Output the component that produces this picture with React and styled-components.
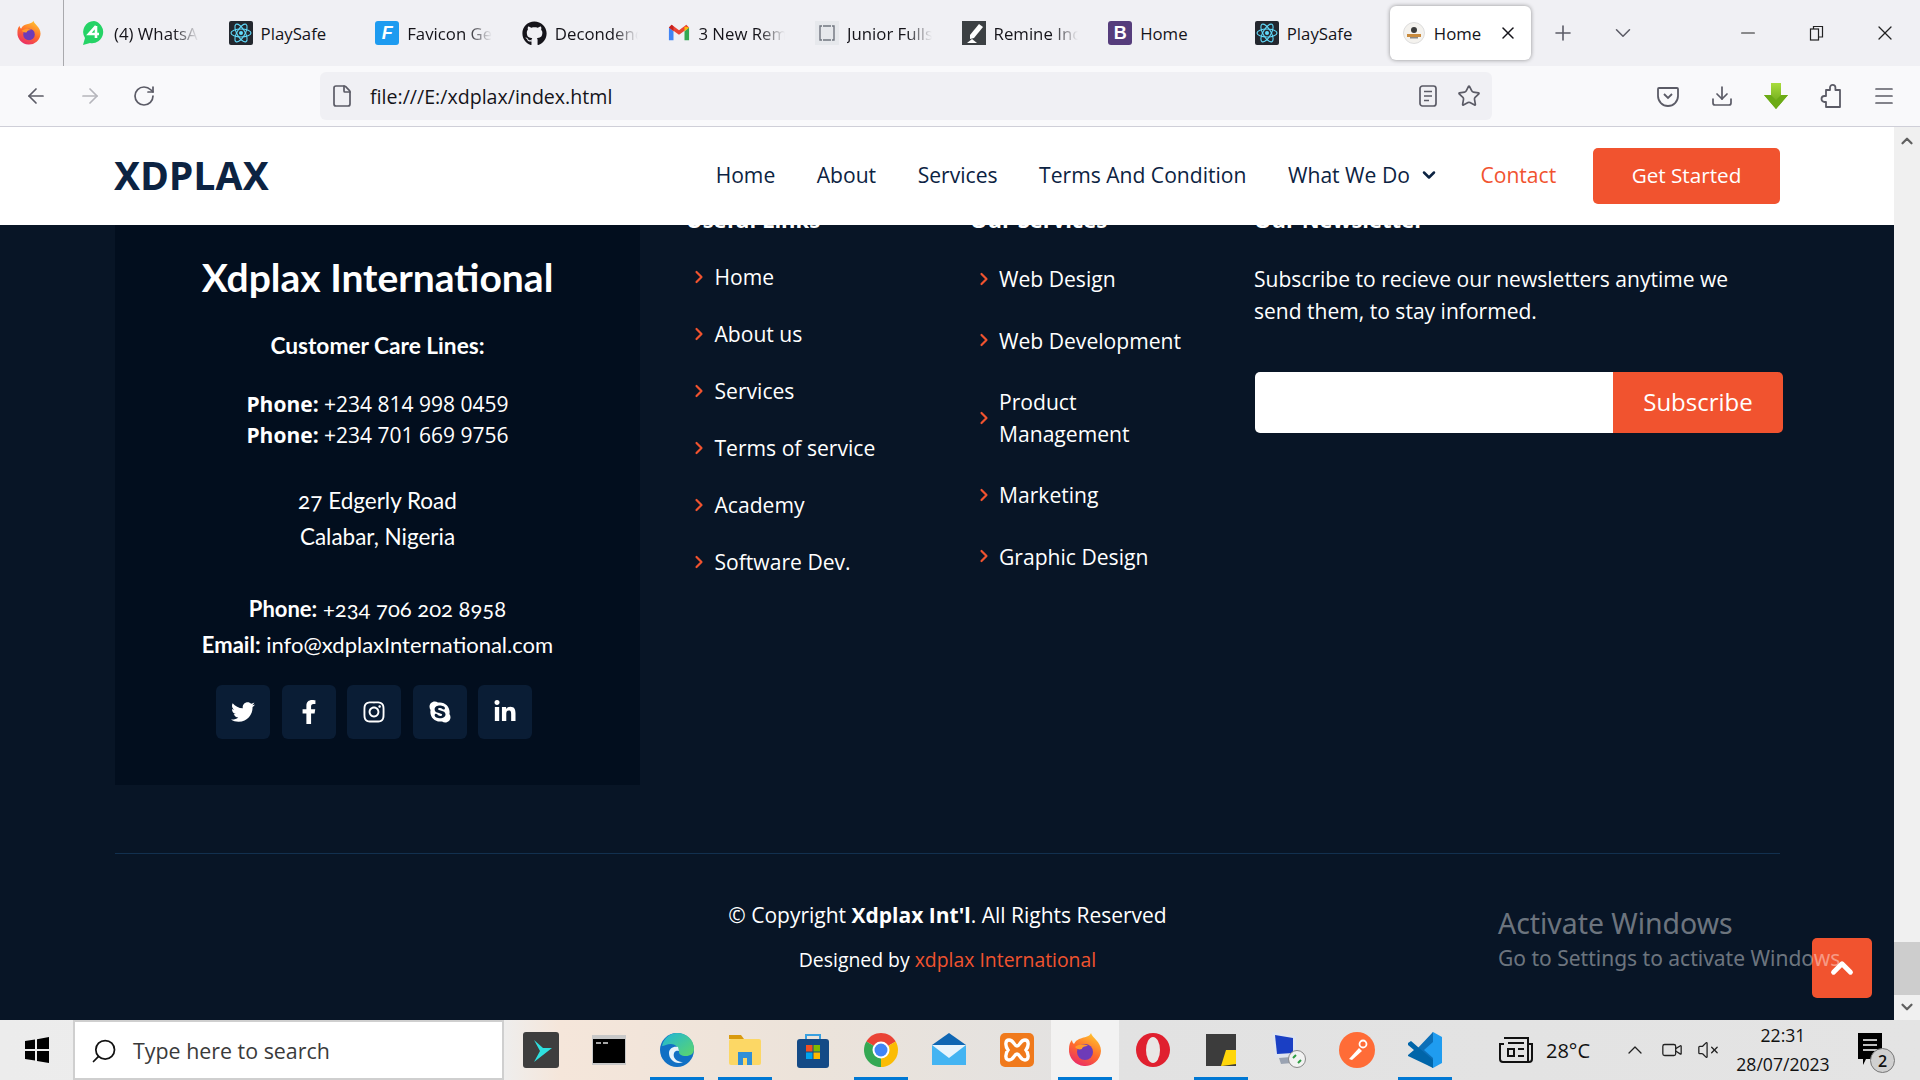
import styled, { createGlobalStyle } from "styled-components"
import { ArrowLeft, ArrowRight, RotateCw, File, Star, Download, Menu, Plus, ChevronDown, ChevronUp, ChevronRight, X, Minus, Search, Video, VolumeX } from "lucide-react"
import { FaGithub, FaTwitter, FaFacebookF, FaInstagram, FaSkype, FaLinkedinIn } from "react-icons/fa"

const RED = "#f1532f"
const OPEN = `"Open Sans", "Noto Sans", sans-serif`
const HEAD = `Lato, "Open Sans", sans-serif`

const GlobalStyle = createGlobalStyle`
  html, body { margin: 0; padding: 0; height: 100%; overflow: hidden; }
  body { font-family: ${OPEN}; background: #fff; }
  * { box-sizing: border-box; }
`

const Screen = styled.div`
  width: 1920px;
  height: 1080px;
  display: flex;
  flex-direction: column;
  overflow: hidden;
`

/* browser chrome */
const TabStrip = styled.div`
  height: 66px;
  flex-shrink: 0;
  background: #f0f0f4;
  display: flex;
  align-items: center;
  color: #15141a;
`
const AppMenu = styled.div`
  width: 64px;
  height: 66px;
  border-right: 1px solid #a9a9ad;
  display: flex;
  align-items: center;
  justify-content: center;
  padding-right: 5px;
  flex-shrink: 0;
`
const TabList = styled.div`
  display: flex;
  padding-left: 3px;
  align-items: center;
`
const Tab = styled.div`
  width: ${p => p.$active ? "141px" : "146.6px"};
  height: 54px;
  padding: 0 ${p => p.$active ? "13px" : "15px"};
  margin-left: ${p => p.$active ? "3.5px" : "0"};
  display: flex;
  align-items: center;
  gap: ${p => p.$active ? "9px" : "8px"};
  border-radius: 6px;
  flex-shrink: 0;
  background: ${p => p.$active ? "#fff" : "transparent"};
  box-shadow: ${p => p.$active ? "0 0 4px rgba(0,0,0,.4)" : "none"};
`
const TabTitle = styled.span`
  font-size: 16.8px;
  white-space: nowrap;
  overflow: hidden;
  flex: 1;
  ${p => p.$fade && "mask-image: linear-gradient(to right, #000 70%, transparent 100%);"}
`
const LetterIcon = styled.span`
  width: 24px;
  height: 24px;
  border-radius: 3px;
  background: ${p => p.$bg};
  color: #fff;
  font: ${p => p.$italic ? "italic 700" : "700"} 18px "Liberation Sans", sans-serif;
  display: flex;
  align-items: center;
  justify-content: center;
  flex-shrink: 0;
`
const StripActions = styled.div`
  display: flex;
  align-items: center;
  gap: 35px;
  margin-left: 20.5px;
  color: #5b5b66;
`
const WindowButtons = styled.div`
  margin-left: auto;
  display: flex;
  align-items: center;
  gap: 48px;
  padding-right: 23px;
  color: #222;
  svg:first-child { margin-right: 2px; }
`
const Toolbar = styled.div`
  height: 61px;
  flex-shrink: 0;
  background: #f9f9fb;
  border-bottom: 1px solid #cfcfd8;
  display: flex;
  align-items: center;
  color: #5b5b66;
`
const NavButtons = styled.div`
  width: 320px;
  padding-left: 24px;
  display: flex;
  gap: 30px;
  flex-shrink: 0;
`
const UrlBar = styled.div`
  width: 1172px;
  height: 48px;
  border-radius: 6px;
  background: #f0f0f4;
  display: flex;
  align-items: center;
  padding: 0 11px 0 10px;
  gap: 16px;
`
const UrlText = styled.span`
  flex: 1;
  font-size: 19.6px;
  padding-top: 1px;
  color: #15141a;
`
const UrlActions = styled.div`
  display: flex;
  gap: 19px;
  align-items: center;
`
const ToolActions = styled.div`
  margin-left: auto;
  padding-right: 24px;
  display: flex;
  gap: 29.5px;
  align-items: center;
`

/* page */
const PageRow = styled.div`
  flex: 1;
  min-height: 0;
  display: flex;
`
const Viewport = styled.div`
  flex: 1;
  min-width: 0;
  position: relative;
  overflow: hidden;
  background: #081526;
`
const Header = styled.header`
  position: relative;
  z-index: 2;
  height: 98px;
  background: #fff;
  display: flex;
  align-items: center;
  padding: 0 114px 0 114px;
`
const Logo = styled.div`
  font-family: "Noto Sans", sans-serif;
  font-size: 39px;
  line-height: 54px;
  margin-top: -2px;
  font-weight: 700;
  color: #0c2342;
  letter-spacing: 0.2px;
`
const Nav = styled.nav`
  margin-left: auto;
  display: flex;
  align-items: center;
  gap: 41.5px;
`
const NavLink = styled.a`
  font-size: 21.1px;
  line-height: 30px;
  margin-top: -2px;
  color: ${p => p.$current ? RED : "#0c2342"};
  display: flex;
  align-items: center;
  gap: 9px;
`
const StartButton = styled.a`
  margin-left: -4.7px;
  width: 187px;
  height: 56px;
  background: ${RED};
  color: #fff;
  font-size: 20.7px;
  padding-bottom: 2px;
  border-radius: 5px;
  display: flex;
  align-items: center;
  justify-content: center;
`
const FooterTop = styled.div`
  margin-top: -30px;
  padding-left: 115px;
  display: flex;
`
const BrandCard = styled.div`
  width: 525px;
  height: 590px;
  margin-right: 46px;
  background: #020e1e;
  color: #fff;
  text-align: center;
  padding-top: 57px;
  display: flex;
  flex-direction: column;
  align-items: center;
  font-family: ${HEAD};
`
const BrandName = styled.h3`
  margin: 0;
  font-size: 39px;
  line-height: 50px;
  font-weight: 700;
`
const CareTitle = styled.div`
  margin-top: 29px;
  font-size: 22.7px;
  line-height: 30px;
  font-weight: 700;
`
const PhoneLines = styled.div`
  margin-top: 28px;
  font-family: ${OPEN};
  font-size: 21px;
  line-height: 31px;
`
const AddressLines = styled.div`
  margin-top: 32px;
  font-size: 22.5px;
  line-height: 36px;
  font-weight: 400;
  font-feature-settings: "onum";
`
const ContactLines = styled(AddressLines)`
  margin-top: 36px;
  font-size: 22px;
`
const SocialRow = styled.div`
  margin-top: 22px;
  margin-right: 7px;
  display: flex;
  gap: 11.5px;
`
const SocialLink = styled.a`
  width: 54px;
  height: 54px;
  border-radius: 6px;
  background: #0a1d35;
  color: #fff;
  display: flex;
  align-items: center;
  justify-content: center;
  font-size: 24px;
`
const LinkColumn = styled.div`
  width: 284px;
  padding-top: 9px;
  color: #fff;
`
const ColumnTitle = styled.h4`
  margin: 0;
  font-size: 22px;
  line-height: 30px;
  font-weight: 700;
`
const LinkList = styled.ul`
  list-style: none;
  margin: ${p => p.$wide ? "14px" : "14.5px"} 0 0;
  padding: 0 0 0 ${p => p.$wide ? "4px" : "3px"};
  width: ${p => p.$wide ? "225px" : "auto"};
`
const LinkItem = styled.li`
  display: flex;
  align-items: center;
  gap: ${p => p.$wide ? "5px" : "5.5px"};
  padding: ${p => p.$wide ? "15px" : "12.5px"} 0;
  font-size: 21.1px;
  line-height: ${p => p.$wide ? "31.5px" : "32px"};
  color: #fff;
  svg { color: ${RED}; flex-shrink: 0; }
`
const NewsColumn = styled.div`
  flex: 1;
  padding-top: 9px;
  padding-right: 111px;
  color: #fff;
`
const NewsText = styled.p`
  margin: 14px 0 0;
  padding-top: 15px;
  max-width: 500px;
  font-size: 21.05px;
  line-height: 32px;
`
const SubscribeForm = styled.form`
  margin: 45px 0 0 1px;
  height: 61px;
  display: flex;
  border-radius: 5px;
  overflow: hidden;
`
const EmailInput = styled.input`
  flex: 1;
  min-width: 0;
  border: 0;
  background: #fff;
`
const SubscribeButton = styled.button`
  width: 170px;
  border: 0;
  padding: 0 0 2px;
  background: ${RED};
  color: #fff;
  font-family: ${OPEN};
  font-size: 24px;
`
const Divider = styled.div`
  margin: 68px 114px 0 115px;
  height: 1px;
  background: #12304f;
`
const Copyright = styled.div`
  margin: 46px 114px 0 115px;
  text-align: center;
  color: #fff;
`
const CopyLine = styled.div`
  font-size: ${p => p.$small ? "19.4px" : "21px"};
  line-height: 30px;
  margin-bottom: 15px;
`
const Accent = styled.a`
  color: ${RED};
`
const BackToTop = styled.a`
  position: absolute;
  right: 22px;
  bottom: 22px;
  width: 60px;
  height: 60px;
  background: ${RED};
  border-radius: 5px;
  color: #fff;
  display: flex;
  align-items: center;
  justify-content: center;
`
const Watermark = styled.div`
  position: absolute;
  left: 1498px;
  top: 777px;
  z-index: 3;
  color: rgba(255,255,255,.42);
  font-family: "Noto Sans", sans-serif;
  pointer-events: none;
  white-space: nowrap;
`
const WatermarkTitle = styled.div`
  font-size: 28.4px;
  line-height: 38px;
`
const WatermarkSub = styled.div`
  font-size: 21px;
  line-height: 30px;
  margin-top: 1px;
`
const Scrollbar = styled.div`
  width: 26px;
  flex-shrink: 0;
  background: #f0f0f0;
  display: flex;
  flex-direction: column;
  align-items: center;
  justify-content: space-between;
  color: #606060;
  padding: 5px 0 4px;
`
const ScrollThumb = styled.div`
  width: 100%;
  height: 53px;
  background: #cdcdcd;
  margin-top: auto;
  margin-bottom: 3px;
`

/* taskbar */
const Taskbar = styled.div`
  height: 60px;
  flex-shrink: 0;
  display: flex;
  align-items: stretch;
  background: linear-gradient(90deg, #ececec 0, #eee 500px, #f5e6da 560px, #ece3da 800px, #e2e2e2 1100px, #e4e4e4 100%);
  color: #111;
`
const StartButtonWin = styled.div`
  width: 73px;
  display: flex;
  align-items: center;
  justify-content: center;
`
const SearchBox = styled.div`
  width: 431px;
  background: #fff;
  border: 2px solid #cfcfcf;
  display: flex;
  align-items: center;
  padding: 1px 0 0 15px;
  gap: 15px;
  font-size: 21.4px;
  color: #3a3a3a;
`
const TaskIcons = styled.div`
  display: flex;
  padding-left: 3px;
`
const TaskIcon = styled.div`
  width: 68px;
  display: flex;
  align-items: center;
  justify-content: center;
  position: relative;
  background: ${p => p.$focus ? "rgba(255,255,255,.55)" : "transparent"};
  &::after {
    content: "";
    display: ${p => p.$running ? "block" : "none"};
    position: absolute;
    left: 7px;
    right: 7px;
    bottom: 0;
    height: 3px;
    background: #0078d4;
  }
`
const Tray = styled.div`
  margin-left: auto;
  display: flex;
  align-items: center;
  padding-right: 31px;
  font-size: 20px;
`
const Weather = styled.div`
  display: flex;
  align-items: center;
  gap: 12px;
  margin-right: 33px;
`
const TrayIcons = styled.div`
  display: flex;
  align-items: center;
  gap: 14px;
  color: #222;
`
const Clock = styled.div`
  width: 124px;
  margin-left: 2px;
  text-align: center;
  font-size: 17.6px;
  line-height: 29px;
`
const NoticeButton = styled.div`
  position: relative;
  margin-left: 12px;
  width: 32px;
  height: 36px;
`
const NoticeBadge = styled.span`
  position: absolute;
  right: -6px;
  bottom: -5px;
  width: 25px;
  height: 25px;
  border-radius: 50%;
  background: #d0d0d0;
  border: 1px solid #777;
  font-size: 16px;
  font-weight: 600;
  display: flex;
  align-items: center;
  justify-content: center;
`

/* small logos */
function FirefoxLogo({ id, size = 26 }) {
  return (
    <svg width={size} height={size} viewBox="0 0 36 36">
      <defs>
        <linearGradient id={id} x1="0.7" y1="0" x2="0.2" y2="1">
          <stop offset="0" stopColor="#ffc22e" />
          <stop offset="0.5" stopColor="#ff6b2c" />
          <stop offset="1" stopColor="#e8256e" />
        </linearGradient>
      </defs>
      <path d="M24 1c1 5 10 8 10 18a16 16 0 1 1-32-2c0-4 1-7 3-9 0 2 1 3 2 4 2-4 5-5 8-6 4-1 8-2 9-5z" fill={`url(#${id})`} />
      <circle cx="18" cy="20" r="8" fill="#6e3bb8" />
      <path d="M8 15c4-3 10-3 13-1-3 0-6 1-6 3-3 1-5 0-7-2z" fill="#ff9a2c" />
    </svg>
  )
}
function ReactIcon() {
  return (
    <svg width="24" height="24" viewBox="0 0 24 24" style={{ flexShrink: 0 }}>
      <rect width="24" height="24" rx="2" fill="#23272e" />
      <g fill="none" stroke="#61dafb" strokeWidth="1.1">
        <ellipse cx="12" cy="12" rx="10" ry="4" />
        <ellipse cx="12" cy="12" rx="10" ry="4" transform="rotate(60 12 12)" />
        <ellipse cx="12" cy="12" rx="10" ry="4" transform="rotate(120 12 12)" />
      </g>
      <circle cx="12" cy="12" r="2" fill="#61dafb" />
    </svg>
  )
}
function WhatsappIcon() {
  return (
    <svg width="24" height="26" viewBox="0 0 24 26" style={{ flexShrink: 0 }}>
      <path d="M12 1a11 11 0 0 0-9 17l-2 7 7-2a11 11 0 1 0 4-22z" fill="#25d366" />
      <path d="M14 6v12M14 6l-7 8h10" fill="none" stroke="#fff" strokeWidth="2.6" />
    </svg>
  )
}
function GmailIcon() {
  return (
    <svg width="22" height="22" viewBox="0 0 24 24" style={{ flexShrink: 0 }}>
      <path d="M1 6v14h5V10z" fill="#4285f4" />
      <path d="M23 6v14h-5V10z" fill="#34a853" />
      <path d="M1 6l11 8 11-8-3-3-8 6-8-6z" fill="#ea4335" />
      <path d="M18 5l5 1-5 4z" fill="#fbbc04" />
      <path d="M1 6l3-3 2 2v5z" fill="#c5221f" />
    </svg>
  )
}
function JuniorIcon() {
  return (
    <svg width="24" height="24" viewBox="0 0 24 24" style={{ flexShrink: 0 }}>
      <rect width="24" height="24" fill="#e6e8ec" />
      <path d="M7 5H5v14h2M17 5h2v14h-2M8 19h8M8 5h8" fill="none" stroke="#70757f" strokeWidth="1.4" />
    </svg>
  )
}
function RemineIcon() {
  return (
    <svg width="24" height="24" viewBox="0 0 24 24" style={{ flexShrink: 0 }}>
      <rect width="24" height="24" fill="#3c4043" />
      <path d="M17 3l4 3-9 11-4 1 0-4z" fill="#fff" />
      <path d="M5 22l5-4 5 4z" fill="#fff" />
    </svg>
  )
}
function SiteIcon() {
  return (
    <svg width="22" height="22" viewBox="0 0 22 22" style={{ flexShrink: 0 }}>
      <circle cx="11" cy="11" r="10.5" fill="#f4f2ee" stroke="#ddd" />
      <rect x="4" y="12" width="14" height="3" fill="#c98a3c" />
      <circle cx="11" cy="8" r="3" fill="#3b3b3b" />
      <rect x="7" y="15" width="8" height="1.5" fill="#888" />
    </svg>
  )
}
function ReaderIcon() {
  return (
    <svg width="20" height="24" viewBox="0 0 20 24" fill="none" stroke="currentColor" strokeWidth="1.7">
      <rect x="2" y="2" width="16" height="20" rx="2.5" />
      <path d="M6 7.500h8M6 12h8M6 16.500h5" />
    </svg>
  )
}
function PocketIcon() {
  return (
    <svg width="24" height="24" viewBox="0 0 24 24" fill="none" stroke="currentColor" strokeWidth="1.8">
      <path d="M3 4h18a1 1 0 0 1 1 1v7a10 10 0 0 1-20 0V5a1 1 0 0 1 1-1z" />
      <path d="M8 10l4 4 4-4" />
    </svg>
  )
}
function PuzzleIcon() {
  return (
    <svg width="24" height="26" viewBox="0 0 24 26" fill="none" stroke="currentColor" strokeWidth="1.8" strokeLinejoin="round">
      <path d="M11 7V4.500a2.700 2.700 0 0 1 5.400 0V7H21v17H7v-5H5.500a3 3 0 0 1 0-6H7V7z" />
    </svg>
  )
}
function GreenArrow() {
  return (
    <svg width="26" height="28" viewBox="0 0 26 28">
      <defs>
        <linearGradient id="greenArrow" x1="0" y1="0" x2="0" y2="1">
          <stop offset="0" stopColor="#a8dc3c" />
          <stop offset="1" stopColor="#5e9c12" />
        </linearGradient>
      </defs>
      <path d="M8 1h10v12h7L13 27 1 13h7z" fill="url(#greenArrow)" />
      <path d="M1 13h7l5 5 5-5h7L13 27z" fill="#6cab16" />
    </svg>
  )
}
function RestoreIcon() {
  return (
    <svg width="16" height="16" viewBox="0 0 16 16" fill="none" stroke="currentColor" strokeWidth="1.2">
      <rect x="1.5" y="4" width="8" height="11" />
      <path d="M4.5 4V1.5h9V12h-4" />
    </svg>
  )
}
function WindowsLogo() {
  return (
    <svg width="26" height="26" viewBox="0 0 26 26" fill="#000">
      <path d="M1 4l10-1.500V12H1zM13 2.200L25 0v12H13zM1 14h10v9.500L1 22zM13 14h12v12l-12-2z" />
    </svg>
  )
}
const appIcons = {
  play: (
    <svg width="36" height="36" viewBox="0 0 36 36">
      <rect width="36" height="36" rx="3" fill="#3e3e3e" />
      <path d="M11 8l9 8h9l-9 7-9 7 6-11z" fill="#2fe0df" />
    </svg>
  ),
  cmd: (
    <svg width="36" height="36" viewBox="0 0 36 36">
      <rect x="1" y="3" width="34" height="30" fill="#c8c8c8" />
      <rect x="2" y="7" width="32" height="24" fill="#000" />
      <path d="M5 11h5M12 11h5" stroke="#ddd" strokeWidth="1.500" />
    </svg>
  ),
  edge: (
    <svg width="36" height="36" viewBox="0 0 36 36">
      <defs>
        <linearGradient id="edgeTop" x1="0" y1="0" x2="1" y2="1">
          <stop offset="0" stopColor="#1fb6d9" />
          <stop offset="1" stopColor="#5ed66a" />
        </linearGradient>
      </defs>
      <circle cx="18" cy="18" r="17" fill="#1170c4" />
      <path d="M3 14C5 5 12 1 18 1c9 0 17 6 17 16 0 5-4 7-8 7-5 0-7-2-7-4 0-5-4-8-8-8-4 0-7 2-9 2z" fill="url(#edgeTop)" />
      <path d="M20 19c-4-1-6 2-5 6 1 3 5 5 9 5-7 3-14-2-14-9 0-4 4-7 9-6z" fill="#e8f3fb" />
    </svg>
  ),
  folder: (
    <svg width="36" height="36" viewBox="0 0 36 36">
      <path d="M2 3h12l3 4H2z" fill="#d99a0e" />
      <rect x="2" y="7" width="32" height="26" rx="2" fill="#fcd765" />
      <path d="M11 33V20h14v13h-5v-7h-4v7z" fill="#2f8fd8" />
    </svg>
  ),
  store: (
    <svg width="36" height="36" viewBox="0 0 36 36">
      <path d="M11 8V3h14v5" fill="none" stroke="#3aa0e0" strokeWidth="2" />
      <rect x="2" y="7" width="32" height="29" rx="3" fill="#144a86" />
      <rect x="11" y="13" width="6.500" height="6.500" fill="#f25022" />
      <rect x="18.500" y="13" width="6.500" height="6.500" fill="#7fba00" />
      <rect x="11" y="20.500" width="6.500" height="6.500" fill="#00a4ef" />
      <rect x="18.500" y="20.500" width="6.500" height="6.500" fill="#ffb900" />
    </svg>
  ),
  chrome: (
    <svg width="36" height="36" viewBox="0 0 36 36">
      <path d="M18 18L3.300 9.500A17 17 0 0 1 32.700 9.500Z" fill="#ea4335" />
      <path d="M18 18L32.700 9.500A17 17 0 0 1 18 35Z" fill="#fbbc04" />
      <path d="M18 18L18 35A17 17 0 0 1 3.300 9.500Z" fill="#34a853" />
      <circle cx="18" cy="18" r="8.500" fill="#fff" />
      <circle cx="18" cy="18" r="6.500" fill="#4285f4" />
    </svg>
  ),
  mail: (
    <svg width="36" height="36" viewBox="0 0 36 36">
      <path d="M1 13L18 1l17 12v20H1z" fill="#0f66b3" />
      <rect x="1" y="13" width="34" height="20" fill="#44b4f2" />
      <path d="M1 13h34L18 26z" fill="#e8f4fc" />
    </svg>
  ),
  xampp: (
    <svg width="36" height="36" viewBox="0 0 36 36">
      <rect x="1" y="1" width="34" height="34" rx="5" fill="#f07a1c" />
      <path d="M10 8c5 0 5 6 8 6s3-6 8-6c4 0 4 6 1 10 3 4 3 10-1 10-5 0-5-6-8-6s-3 6-8 6c-4 0-4-6-1-10-3-4-3-10 1-10z" fill="none" stroke="#fff" strokeWidth="3.400" />
    </svg>
  ),
  opera: (
    <svg width="36" height="36" viewBox="0 0 36 36">
      <circle cx="18" cy="18" r="17" fill="#e0202f" />
      <ellipse cx="18" cy="18" rx="7" ry="13" fill="#e9e7e5" />
    </svg>
  ),
  sticky: (
    <svg width="36" height="36" viewBox="0 0 36 36">
      <rect x="3" y="2" width="30" height="32" fill="#3c3c3c" />
      <path d="M33 18v14l-14 2h-1l5-16z" fill="#ffd60a" />
    </svg>
  ),
  rdp: (
    <svg width="36" height="38" viewBox="0 0 36 38">
      <path d="M1 1l24 4v20L4 27z" fill="#dfe4ee" />
      <path d="M4 4l18 3v15L6 23z" fill="#1a3fc4" />
      <path d="M8 27l12-1 1 6-11 1z" fill="#9aa3b2" />
      <circle cx="26" cy="28" r="8.500" fill="#f2f2f2" stroke="#888" />
      <path d="M22 27l3-3M30 29l-3 3" stroke="#2f9e44" strokeWidth="2" />
    </svg>
  ),
  postman: (
    <svg width="36" height="36" viewBox="0 0 36 36">
      <circle cx="18" cy="18" r="18" fill="#ff6c37" />
      <path d="M10 27l10-11 3 3-10 9z" fill="#fff" />
      <circle cx="24" cy="12" r="3.500" fill="none" stroke="#fff" strokeWidth="1.800" />
    </svg>
  ),
  vscode: (
    <svg width="36" height="38" viewBox="0 0 36 38">
      <path d="M26 1l9 5v26l-9 5-14-14z" fill="#1f9cf0" />
      <path d="M26 1L9 19l17 18V27L17 19l9-8z" fill="#0c6fb8" />
      <path d="M1 12l3-2 22 19v8l-6-3L1 25l0-1 6-5-6-5z" fill="#0065a9" />
    </svg>
  ),
}

const tabs = [
  { title: "(4) WhatsApp", icon: <WhatsappIcon />, fade: true },
  { title: "PlaySafe", icon: <ReactIcon /> },
  { title: "Favicon Generator", icon: <LetterIcon $bg="#1d9bf0" $italic>F</LetterIcon>, fade: true },
  { title: "Decondence", icon: <FaGithub size={25} style={{ flexShrink: 0 }} />, fade: true },
  { title: "3 New Remine", icon: <GmailIcon />, fade: true },
  { title: "Junior Fullstack", icon: <JuniorIcon />, fade: true },
  { title: "Remine Inc", icon: <RemineIcon />, fade: true },
  { title: "Home", icon: <LetterIcon $bg="#563d7c">B</LetterIcon> },
  { title: "PlaySafe", icon: <ReactIcon /> },
]
const navItems = ["Home", "About", "Services", "Terms And Condition"]
const usefulLinks = ["Home", "About us", "Services", "Terms of service", "Academy", "Software Dev."]
const serviceLinks = ["Web Design", "Web Development", "Product Management", "Marketing", "Graphic Design"]
const socials = [FaTwitter, FaFacebookF, FaInstagram, FaSkype, FaLinkedinIn]
const taskApps = [
  { key: "play" }, { key: "cmd" }, { key: "edge", running: true }, { key: "folder", running: true },
  { key: "store" }, { key: "chrome", running: true }, { key: "mail" }, { key: "xampp" },
  { key: "firefox", running: true, focus: true }, { key: "opera" }, { key: "sticky", running: true },
  { key: "rdp" }, { key: "postman" }, { key: "vscode", running: true },
]

export default function App() {
  return (
    <Screen>
      <GlobalStyle />
      <TabStrip>
        <AppMenu><FirefoxLogo id="ffMenu" /></AppMenu>
        <TabList>
          {tabs.map((t, i) => (
            <Tab key={i}>
              {t.icon}
              <TabTitle $fade={t.fade}>{t.title}</TabTitle>
            </Tab>
          ))}
          <Tab $active>
            <SiteIcon />
            <TabTitle>Home</TabTitle>
            <X size={20} strokeWidth={1.8} />
          </Tab>
        </TabList>
        <StripActions>
          <Plus size={24} strokeWidth={1.6} />
          <ChevronDown size={26} strokeWidth={1.4} />
        </StripActions>
        <WindowButtons>
          <Minus size={22} strokeWidth={1.2} />
          <RestoreIcon />
          <X size={24} strokeWidth={1.3} />
        </WindowButtons>
      </TabStrip>

      <Toolbar>
        <NavButtons>
          <ArrowLeft size={24} strokeWidth={1.7} />
          <ArrowRight size={24} strokeWidth={1.7} color="#b5b5bb" />
          <RotateCw size={24} strokeWidth={1.7} />
        </NavButtons>
        <UrlBar>
          <File size={24} strokeWidth={1.7} />
          <UrlText>file:///E:/xdplax/index.html</UrlText>
          <UrlActions>
            <ReaderIcon />
            <Star size={24} strokeWidth={1.7} />
          </UrlActions>
        </UrlBar>
        <ToolActions>
          <PocketIcon />
          <Download size={24} strokeWidth={1.7} />
          <GreenArrow />
          <PuzzleIcon />
          <Menu size={24} strokeWidth={1.7} />
        </ToolActions>
      </Toolbar>

      <PageRow>
        <Viewport>
          <Header>
            <Logo>XDPLAX</Logo>
            <Nav>
              {navItems.map(n => <NavLink key={n}>{n}</NavLink>)}
              <NavLink>What We Do <ChevronDown size={20} strokeWidth={3} /></NavLink>
              <NavLink $current>Contact</NavLink>
              <StartButton>Get Started</StartButton>
            </Nav>
          </Header>

          <FooterTop>
            <BrandCard>
              <BrandName>Xdplax International</BrandName>
              <CareTitle>Customer Care Lines:</CareTitle>
              <PhoneLines>
                <div><b>Phone:</b> +234 814 998 0459</div>
                <div><b>Phone:</b> +234 701 669 9756</div>
              </PhoneLines>
              <AddressLines>
                <div>27 Edgerly Road</div>
                <div>Calabar, Nigeria</div>
              </AddressLines>
              <ContactLines>
                <div><b>Phone:</b> +234 706 202 8958</div>
                <div><b>Email:</b> info@xdplaxInternational.com</div>
              </ContactLines>
              <SocialRow>
                {socials.map((Icon, i) => <SocialLink key={i}><Icon /></SocialLink>)}
              </SocialRow>
            </BrandCard>

            <LinkColumn>
              <ColumnTitle>Useful Links</ColumnTitle>
              <LinkList>
                {usefulLinks.map(l => (
                  <LinkItem key={l}><ChevronRight size={20} strokeWidth={2.6} />{l}</LinkItem>
                ))}
              </LinkList>
            </LinkColumn>

            <LinkColumn>
              <ColumnTitle>Our Services</ColumnTitle>
              <LinkList $wide>
                {serviceLinks.map(l => (
                  <LinkItem key={l} $wide><ChevronRight size={20} strokeWidth={2.6} />{l}</LinkItem>
                ))}
              </LinkList>
            </LinkColumn>

            <NewsColumn>
              <ColumnTitle>Our Newsletter</ColumnTitle>
              <NewsText>Subscribe to recieve our newsletters anytime we send them, to stay informed.</NewsText>
              <SubscribeForm>
                <EmailInput />
                <SubscribeButton type="button">Subscribe</SubscribeButton>
              </SubscribeForm>
            </NewsColumn>
          </FooterTop>

          <Divider />
          <Copyright>
            <CopyLine>© Copyright <b>Xdplax Int'l</b>. All Rights Reserved</CopyLine>
            <CopyLine $small>Designed by <Accent>xdplax International</Accent></CopyLine>
          </Copyright>

          <BackToTop><ChevronUp size={34} strokeWidth={3.4} /></BackToTop>
          <Watermark>
            <WatermarkTitle>Activate Windows</WatermarkTitle>
            <WatermarkSub>Go to Settings to activate Windows.</WatermarkSub>
          </Watermark>
        </Viewport>
        <Scrollbar>
          <ChevronUp size={18} strokeWidth={3} />
          <ScrollThumb />
          <ChevronDown size={18} strokeWidth={3} />
        </Scrollbar>
      </PageRow>

      <Taskbar>
        <StartButtonWin><WindowsLogo /></StartButtonWin>
        <SearchBox>
          <Search size={28} strokeWidth={1.5} color="#111" style={{ transform: "scaleX(-1)" }} />
          Type here to search
        </SearchBox>
        <TaskIcons>
          {taskApps.map(a => (
            <TaskIcon key={a.key} $running={a.running} $focus={a.focus}>
              {a.key === "firefox" ? <FirefoxLogo id="ffTask" size={36} /> : appIcons[a.key]}
            </TaskIcon>
          ))}
        </TaskIcons>
        <Tray>
          <Weather>
            <svg width="36" height="28" viewBox="0 0 36 28" fill="none" stroke="#111" strokeWidth="2">
              <path d="M6 2h24v24H5a3 3 0 0 1-3-3V8h4M30 8h4v15a3 3 0 0 1-3 3" />
              <path d="M10 7h16M10 13h6v7h-6zM20 13h6M20 20h6" />
            </svg>
            28°C
          </Weather>
          <TrayIcons>
            <ChevronUp size={24} strokeWidth={1.3} />
            <Video size={22} strokeWidth={1.4} />
            <VolumeX size={22} strokeWidth={1.4} />
          </TrayIcons>
          <Clock>
            <div>22:31</div>
            <div>28/07/2023</div>
          </Clock>
          <NoticeButton>
            <svg width="26" height="34" viewBox="0 0 26 34">
              <path d="M1 1h24v26H9l-3 6v-6H1z" fill="#000" />
              <path d="M6 8h14M6 13h14M6 18h14" stroke="#fff" strokeWidth="1.500" />
            </svg>
            <NoticeBadge>2</NoticeBadge>
          </NoticeButton>
        </Tray>
      </Taskbar>
    </Screen>
  )
}
